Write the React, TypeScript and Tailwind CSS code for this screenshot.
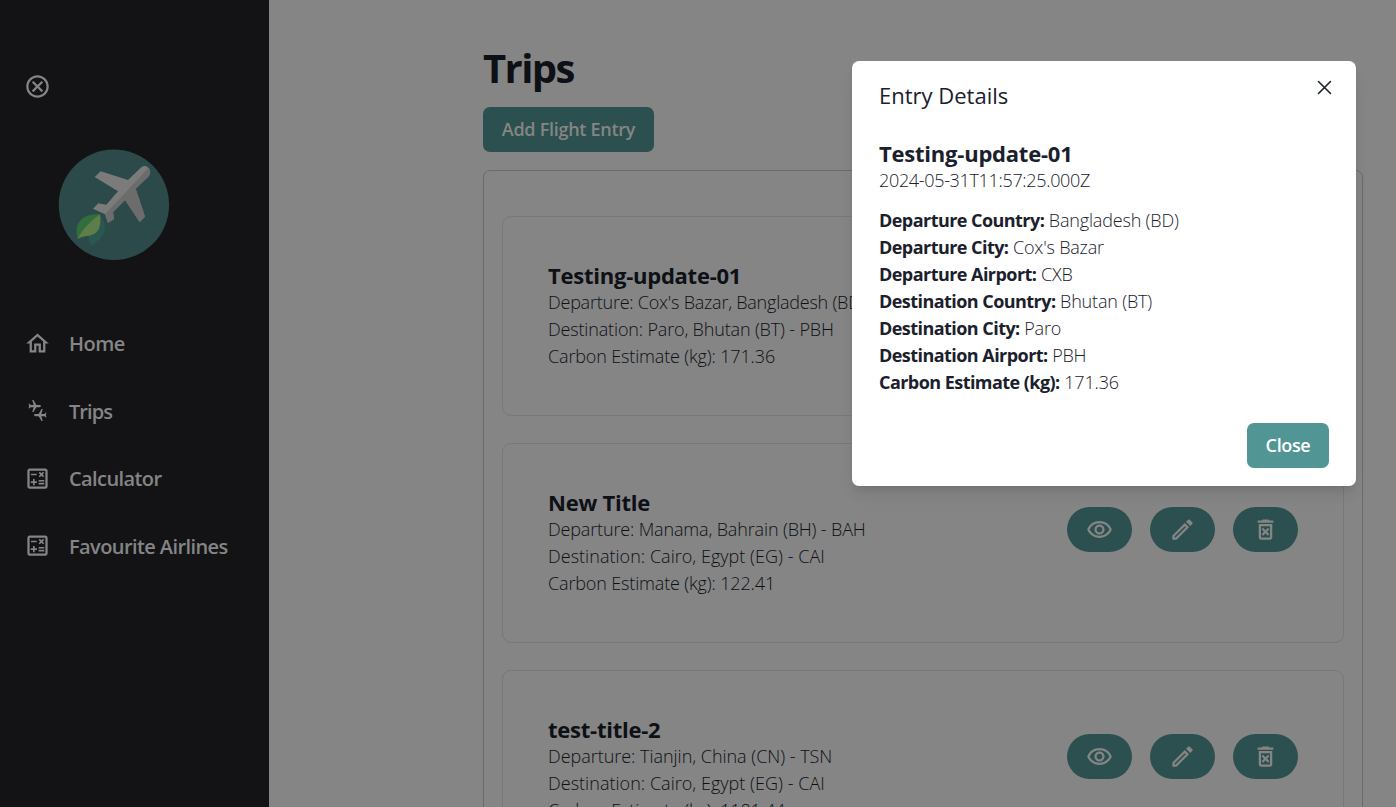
import React from 'react';
import { MdOutlineCancel, MdOutlineHome, MdOutlineConnectingAirports, MdOutlineCalculate, MdOutlineRemoveRedEye, MdOutlineEdit, MdOutlineDeleteForever } from 'react-icons/md';

const nav = [
  { icon: MdOutlineHome, label: 'Home', cls: 'tracking-[-0.5px]', iconCls: '' },
  { icon: MdOutlineConnectingAirports, label: 'Trips', cls: 'tracking-[-0.95px]', iconCls: 'mb-px' },
  { icon: MdOutlineCalculate, label: 'Calculator', cls: 'tracking-[-0.6px]', iconCls: '' },
  { icon: MdOutlineCalculate, label: 'Favourite Airlines', cls: 'tracking-[-0.59px]', iconCls: 'mb-[2px]' },
];

const trips = [
  { title: 'Testing-update-01', dep: "Cox's Bazar, Bangladesh (BD) - CXB", dest: 'Paro, Bhutan (BT) - PBH', kg: '171.36', depCls: 'tracking-[-0.23px]', destCls: 'tracking-[-0.16px]' },
  { title: 'New Title', dep: 'Manama, Bahrain (BH) - BAH', dest: 'Cairo, Egypt (EG) - CAI', kg: '122.41', depCls: 'tracking-[-0.15px]', destCls: 'tracking-[0.03px]' },
  { title: 'test-title-2', dep: 'Tianjin, China (CN) - TSN', dest: 'Cairo, Egypt (EG) - CAI', kg: '1181.44', depCls: 'tracking-[-0.03px]', destCls: 'tracking-[0.03px]' },
];

const details = [
  ['Departure Country:', 'Bangladesh (BD)'],
  ['Departure City:', "Cox's Bazar"],
  ['Departure Airport:', 'CXB'],
  ['Destination Country:', 'Bhutan (BT)'],
  ['Destination City:', 'Paro'],
  ['Destination Airport:', 'PBH'],
  ['Carbon Estimate (kg):', '171.36'],
];

function Logo() {
  return (
    <svg width="112" height="112" viewBox="0 0 112 112" className="ml-[58px] mt-[49px] shrink-0">
      <circle cx="55.9" cy="55.8" r="55.2" fill="#2b4a49" />
      <path d="M27.500 84 C32 86 30 92 33.300 97 C39 92 47 88 47 79 C47 74 45 70 42 65.300 Z" fill="#285850" />
      <path d="M42 65.300 C26 64 17 73 18.700 84 L19.700 90.200 Z" fill="#316e3b" />
      <path d="M42 65.300 C44 82 38 86 29 87 C25 87.500 22 88.500 19.700 90.200 C24 80 33 72 42 65.300 Z" fill="#5e7d48" />
      <path d="M36.700 28 L42.700 22.300 L70 31 L82.500 19 C86 16 89 17 90.500 19 C92.500 21 93 24 90.500 27.500 L77.700 39.700 L87 67.700 L81.700 73 L67 51 L55 63 L56 70 L50 74 L47 65.300 L35 59.700 L40.300 54.300 L48.300 55.700 L60 42.300 Z" fill="#7b7b7b" />
      <path d="M90.500 19 C92.500 21 93 24 90.500 27.500 L77.700 39.700 L87 67.700 L81.700 73 L67 51 L55 63 L56 70 L50 74 L47 65.300 Z" fill="#6c6c6c" />
    </svg>
  );
}

export default function App() {
  return (
    <div className="relative flex h-[807px] w-[1396px] overflow-hidden bg-[#858585] font-['Open_Sans','Noto_Sans',sans-serif] text-[18px] leading-[27px] text-[#0d1015]">
      <aside className="flex w-[269px] shrink-0 flex-col bg-[#131315] pt-[73px] text-[#858585]">
        <MdOutlineCancel size={27} className="ml-6 shrink-0" />
        <Logo />
        <nav className="mt-[69px] flex flex-col gap-[40.600px] pl-6">
          {nav.map(({ icon: Icon, label, cls, iconCls }) => (
            <a key={label} className="flex h-[27px] items-center gap-[18px]">
              <Icon size={27} className={`shrink-0 ${iconCls}`} />
              <span className={`whitespace-nowrap text-[20px] font-semibold ${cls}`}>{label}</span>
            </a>
          ))}
        </nav>
      </aside>
      <main className="ml-[214px] flex w-[880px] shrink-0 flex-col pt-[41px]">
        <h1 className="text-[40px] font-bold leading-[54px] tracking-[-1.6px]"><span>Trips</span></h1>
        <button className="mt-3 h-[45px] w-[171px] shrink-0 rounded-[7px] bg-[#2b504f] font-semibold tracking-[-0.28px] text-[#858585]"><span>Add Flight Entry</span></button>
        <section className="mt-[18px] flex w-[880px] shrink-0 flex-col gap-[27px] rounded-[7px] border border-[#6a6a6a] px-[18px] pt-[45px]">
          {trips.map((t) => (
            <article key={t.title} className="flex h-[200px] items-start justify-between rounded-[9px] border border-[#77777c] px-[45px] pt-[45px]">
              <div className="whitespace-nowrap font-light">
                <h2 className="text-[22px] font-bold tracking-[-0.24px]"><span>{t.title}</span></h2>
                <p className={t.depCls}><span>Departure: {t.dep}</span></p>
                <p className={t.destCls}><span>Destination: {t.dest}</span></p>
                <p className="tracking-[-0.15px]"><span>Carbon Estimate (kg): {t.kg}</span></p>
              </div>
              <div className="mt-[18px] flex gap-[18px] text-[#858585]">
                {[MdOutlineRemoveRedEye, MdOutlineEdit, MdOutlineDeleteForever].map((Icon, i) => (
                  <button key={i} className="flex h-[45px] w-[65px] items-center justify-center rounded-[22.500px] bg-[#2b504f]">
                    <Icon size={27} />
                  </button>
                ))}
              </div>
            </article>
          ))}
        </section>
      </main>
      <div role="dialog" className="absolute left-[852px] top-[61px] flex h-[425px] w-[504px] flex-col rounded-[7px] bg-white px-[27px] text-[#1a202c] shadow-[0_10px_15px_-3px_rgba(0,0,0,0.1),0_4px_6px_-2px_rgba(0,0,0,0.05)]">
        <header className="flex justify-between pt-[17px]">
          <h3 className="text-[22px] leading-[34px]"><span>Entry Details</span></h3>
          <svg width="15" height="15" viewBox="0 0 15 15" className="mr-[-3px] mt-[2px]" stroke="#1a202c" strokeWidth="1.600" strokeLinecap="round"><path d="M1.500 1.500 L13.500 13.500 M13.500 1.500 L1.500 13.500" /></svg>
        </header>
        <h2 className="mt-[28px] text-[22px] font-bold tracking-[-0.22px]"><span>Testing-update-01</span></h2>
        <p className="font-light tracking-[-0.33px]"><span>2024-05-31T11:57:25.000Z</span></p>
        <div className="mt-[13px] font-light tracking-[-0.17px]">
          {details.map(([k, v]) => (
            <p key={k}><b className="font-bold tracking-[-0.55px]">{k}</b> <span>{v}</span></p>
          ))}
        </div>
        <button className="mt-[27px] h-[45px] w-[82px] self-end rounded-[7px] bg-[#519594] font-semibold tracking-[-0.35px] text-white"><span>Close</span></button>
      </div>
    </div>
  );
}
